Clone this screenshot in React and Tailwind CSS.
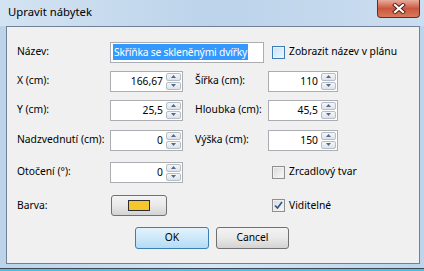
import React from "react";

const ui = "font-['Noto_Sans',sans-serif] text-[10.3px] text-black";

function SpinHalf({ up }) {
  return (
    <div className="flex-1 flex items-center justify-center border border-[#b5bdc7] rounded-[2px] bg-gradient-to-b from-[#f5f6f7] to-[#dfe3e8]">
      <svg width="5" height="3" viewBox="0 0 5 3">
        {up ? (
          <path d="M0 3 L2.5 0 L5 3 Z" fill="#4f6a8e" />
        ) : (
          <path d="M0 0 L2.5 3 L5 0 Z" fill="#4f6a8e" />
        )}
      </svg>
    </div>
  );
}

function NumInput({ value, w = "w-[73px]" }) {
  return (
    <div className={`${w} h-[21px] border border-[#abadb3] bg-white flex items-center`}>
      <span className="flex-1 text-right pr-[3px] leading-none">{value}</span>
      <div className="w-[15px] h-[17px] flex flex-col gap-[1px] mr-[1px]">
        <SpinHalf up />
        <SpinHalf />
      </div>
    </div>
  );
}

function Check({ checked, hot, label }) {
  return (
    <div className="flex items-center gap-[4px]">
      <div
        className={`w-[13px] h-[13px] border p-[1px] ${
          hot ? "border-[#3d7bb8]" : "border-[#8e8f8f]"
        }`}
      >
        <div
          className={`w-full h-full flex items-center justify-center bg-gradient-to-br ${
            hot ? "from-[#c9e4f7] to-[#eaf5fd]" : "from-[#dcdcdc] to-[#f7f7f7]"
          }`}
        >
          {checked && (
            <svg width="9" height="9" viewBox="0 0 9 9">
              <path d="M1 4.5 L3.5 7 L8 1" fill="none" stroke="#2b5592" strokeWidth="1.6" />
            </svg>
          )}
        </div>
      </div>
      <span>{label}</span>
    </div>
  );
}

function Label({ children, w = "w-[93px]" }) {
  return <div className={`${w} shrink-0`}>{children}</div>;
}

export default function App() {
  return (
    <div className={`${ui} w-[424px] h-[271px] relative overflow-hidden bg-gradient-to-r from-[#bcd3ea] via-[#d6e6f4] to-[#bcd4ec]`}>
      {/* title bar */}
      <div className="h-[26px] flex items-center pl-[8px] bg-gradient-to-r from-[#d3e3f2] via-[#bcd3ea] to-[#cbddf0]">
        <span className="text-[11.3px] pb-[2px]">Upravit nábytek</span>
      </div>
      <div className="absolute left-[377px] top-0 w-[43px] h-[18px] rounded-b-[4px] border border-t-0 border-[#6e2a1e] bg-gradient-to-b from-[#e8ab9b] via-[#c9573f] to-[#d77a5b] flex items-center justify-center">
        <svg width="14" height="11" viewBox="0 0 14 11">
          <path d="M3 2 L11 9 M11 2 L3 9" stroke="#4a2019" strokeWidth="4" strokeLinecap="square" />
          <path d="M3 2 L11 9 M11 2 L3 9" stroke="#ffffff" strokeWidth="2.2" strokeLinecap="square" />
        </svg>
      </div>

      {/* client area */}
      <div className="ml-[6px] w-[414px] h-[238px] border border-[#6f8193] bg-[#f0f0f0] pl-[10px] pt-[15px] flex flex-col">
        <div className="h-[20px] flex items-center">
          <Label>Název:</Label>
          <div className="w-[154px] h-[21px] border border-[#abadb3] bg-white flex items-center pl-[2px]">
            <span className="bg-[#3399ff] text-white leading-[16px] px-[1px] tracking-[-0.2px]">Skříňka se skleněnými dvířky</span>
          </div>
          <div className="ml-[8px]">
            <Check hot label="Zobrazit název v plánu" />
          </div>
        </div>

        <div className="mt-[9px] h-[20px] flex items-center">
          <Label>X (cm):</Label>
          <NumInput value="166,67" />
          <div className="ml-[12px]"><Label w="w-[73px]">Šířka (cm):</Label></div>
          <NumInput value="110" w="w-[70px]" />
        </div>

        <div className="mt-[9px] h-[20px] flex items-center">
          <Label>Y (cm):</Label>
          <NumInput value="25,5" />
          <div className="ml-[12px]"><Label w="w-[73px]">Hloubka (cm):</Label></div>
          <NumInput value="45,5" w="w-[70px]" />
        </div>

        <div className="mt-[10px] h-[20px] flex items-center">
          <Label>Nadzvednutí (cm):</Label>
          <NumInput value="0" />
          <div className="ml-[12px]"><Label w="w-[73px]">Výška (cm):</Label></div>
          <NumInput value="150" w="w-[70px]" />
        </div>

        <div className="mt-[12px] h-[20px] flex items-center">
          <Label>Otočení (°):</Label>
          <NumInput value="0" />
          <div className="ml-[89px]">
            <Check label="Zrcadlový tvar" />
          </div>
        </div>

        <div className="mt-[13px] h-[21px] flex items-center">
          <Label>Barva:</Label>
          <div className="ml-[1px] w-[56px] h-[21px] rounded-[3px] border border-[#707070] bg-gradient-to-b from-[#f3f3f3] via-[#e9e9e9] to-[#d3d3d3] flex items-center justify-center">
            <div className="w-[22px] h-[11px] border border-[#2e2e2e] bg-[#f6c62c]" />
          </div>
          <div className="ml-[105px]">
            <Check checked label="Viditelné" />
          </div>
        </div>

        <div className="mt-[11px] h-[22px] flex items-center">
          <div className="ml-[118px] w-[74px] h-[22px] rounded-[3px] border border-[#3c7fb1] bg-gradient-to-b from-[#e3f2fc] via-[#cde8f9] to-[#b3dcf5] flex items-center justify-center">
            OK
          </div>
          <div className="ml-[7px] w-[73px] h-[22px] rounded-[3px] border border-[#707070] bg-gradient-to-b from-[#f3f3f3] via-[#e9e9e9] to-[#d3d3d3] flex items-center justify-center">
            Cancel
          </div>
        </div>
      </div>

      {/* bottom edge */}
      <div className="absolute left-0 right-0 bottom-[2px] h-[1px] bg-[#3d4a57]" />
      <div className="absolute left-0 right-0 bottom-0 h-[2px] bg-[#43c2e6]" />
    </div>
  );
}
